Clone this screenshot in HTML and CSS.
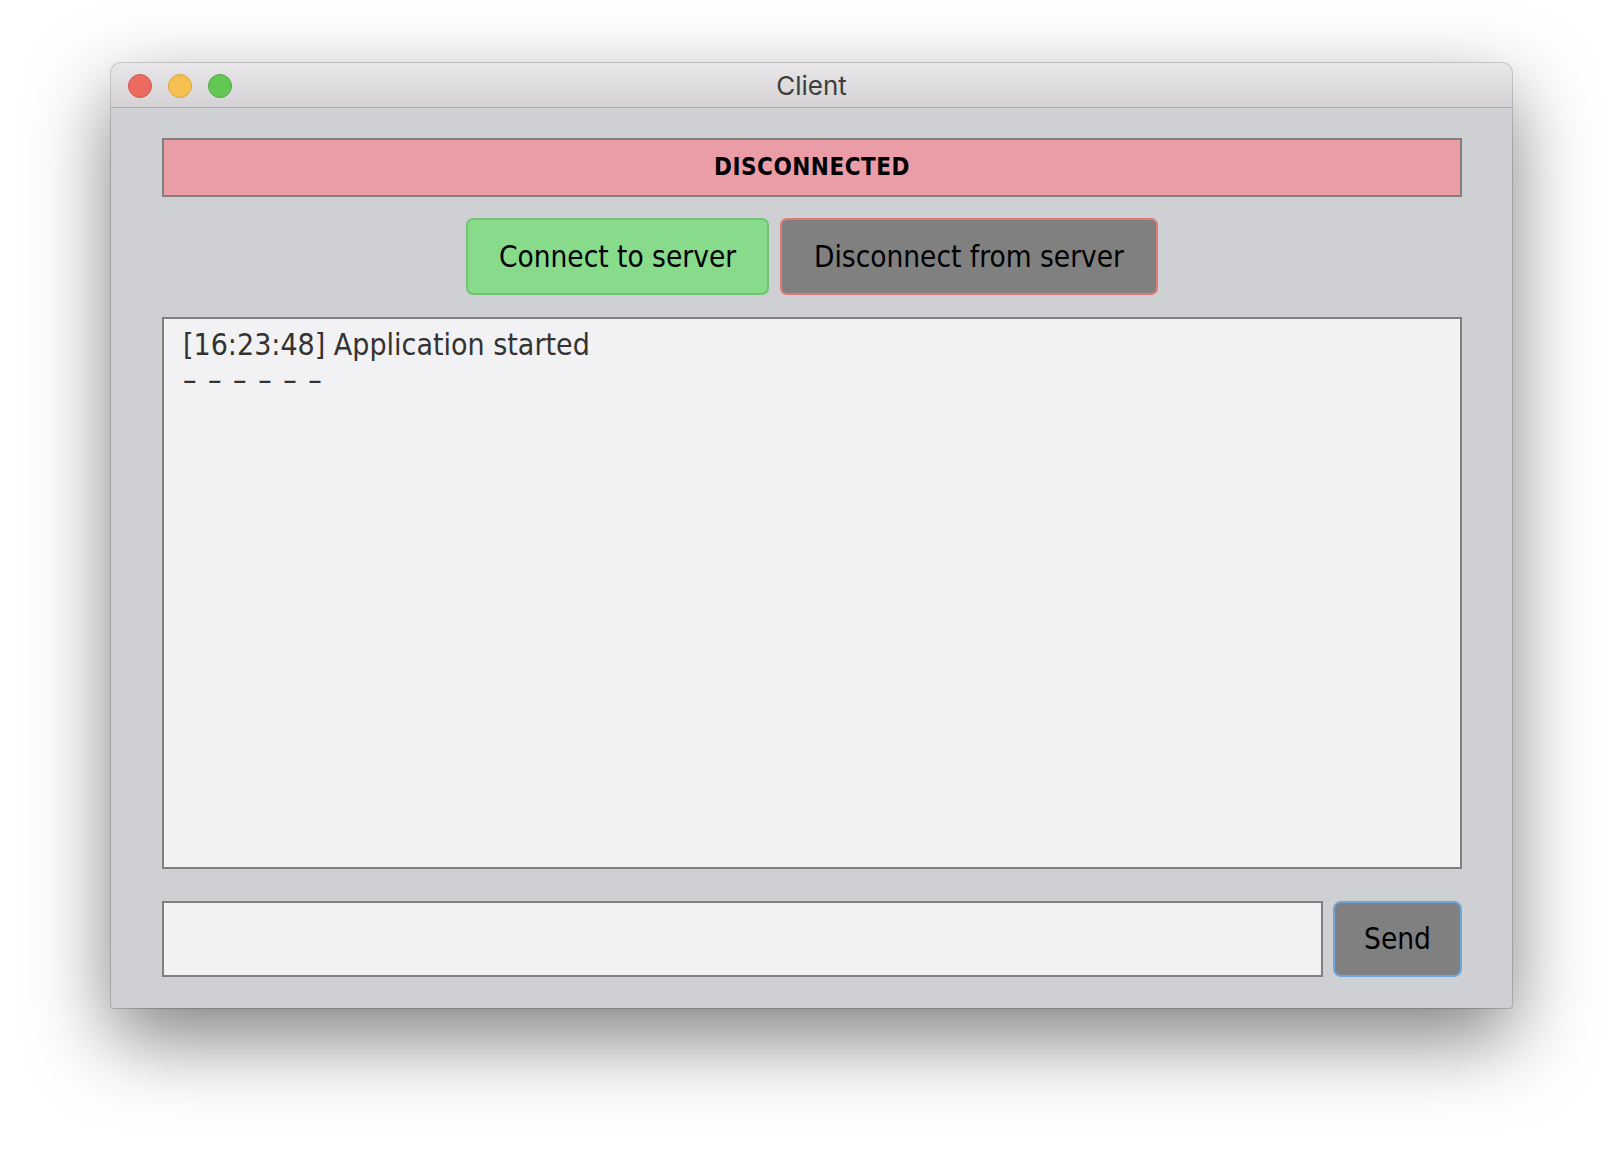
FILE: index.html
```html
<!DOCTYPE html>
<html lang="en">
<head>
<meta charset="utf-8">
<title>Client</title>
<link rel="stylesheet" href="styles.css">
</head>
<body>
<div class="window">
  <div class="titlebar">
    <div class="lights">
      <span class="light red"></span>
      <span class="light yellow"></span>
      <span class="light green"></span>
    </div>
    <div class="title">Client</div>
    <div></div>
  </div>
  <div class="content">
    <div class="status">DISCONNECTED</div>
    <div class="actions">
      <button class="btn connect">Connect to server</button>
      <button class="btn disconnect">Disconnect from server</button>
    </div>
    <div class="log">
      <div class="line">[16:23:48] Application started</div>
      <div class="line sep">– – – – – –</div>
    </div>
    <div class="compose">
      <div class="input"></div>
      <button class="btn send">Send</button>
    </div>
  </div>
</div>
</body>
</html>
```
FILE: styles.css
```css
html, body {
  margin: 0;
  padding: 0;
  background: #ffffff;
}

body {
  width: 1624px;
  height: 1168px;
  overflow: hidden;
}

.window {
  width: 1401px;
  height: 945px;
  margin: 63px 0 0 111px;
  box-sizing: border-box;
  background: #cfd0d4;
  border-radius: 10px 10px 3px 3px;
  box-shadow: 0 0 0 1px rgba(0, 0, 0, 0.16), 0 30px 80px rgba(0, 0, 0, 0.5);
  display: flex;
  flex-direction: column;
  overflow: hidden;
}

.titlebar {
  height: 44px;
  flex: none;
  border-bottom: 1px solid #afadaf;
  background: linear-gradient(#e9e7e9, #d4d2d4);
  display: grid;
  grid-template-columns: 1fr auto 1fr;
  align-items: center;
}

.lights {
  display: flex;
  gap: 16px;
  padding-left: 17px;
  padding-top: 1px;
}

.light {
  width: 24px;
  height: 24px;
  box-sizing: border-box;
  border-radius: 50%;
  border: 1px solid;
}

.red { background: #ec6a5f; border-color: #d4574c; }
.yellow { background: #f5c04f; border-color: #d9a441; }
.green { background: #63c655; border-color: #51aa44; }

.title {
  font-family: Inter, "Liberation Sans", sans-serif;
  font-size: 26px;
  color: #3e3e3e;
  padding-top: 1px;
}

.content {
  flex: 1;
  padding: 30px 50px 31px 51px;
  display: flex;
  flex-direction: column;
}

.status {
  height: 59px;
  flex: none;
  box-sizing: border-box;
  border: 2px solid #808080;
  background: #eb9da7;
  display: flex;
  align-items: center;
  justify-content: center;
  padding-bottom: 2px;
  font-family: "DejaVu Sans Condensed", "DejaVu Sans", sans-serif;
  font-weight: bold;
  font-size: 24px;
  letter-spacing: 0.5px;
  color: #000;
}

.actions {
  margin-top: 21px;
  display: flex;
  justify-content: center;
  gap: 11px;
}

.btn {
  height: 77px;
  box-sizing: border-box;
  border: 2px solid;
  border-radius: 7px;
  padding: 0;
  font-family: "DejaVu Sans Condensed", "DejaVu Sans", sans-serif;
  font-size: 29.5px;
  color: #000;
}

.connect {
  width: 303px;
  background: #87db8b;
  border-color: #70c474;
}

.disconnect {
  width: 378px;
  background: #808080;
  border-color: #e07876;
}

.log {
  margin-top: 22px;
  height: 552px;
  flex: none;
  box-sizing: border-box;
  border: 2px solid #808080;
  background: #f2f1f4;
  padding: 8px 19px;
  font-family: "DejaVu Sans Condensed", "DejaVu Sans", sans-serif;
  font-size: 30px;
  line-height: 35px;
  color: #333333;
}

.sep {
  word-spacing: 3px;
}

.compose {
  margin-top: 32px;
  display: flex;
  gap: 10px;
  height: 76px;
}

.input {
  flex: 1;
  box-sizing: border-box;
  border: 2px solid #808080;
  background: #f2f1f4;
}

.send {
  width: 129px;
  height: 76px;
  background: #808080;
  border-color: #6ea6da;
  border-radius: 8px;
}
```
